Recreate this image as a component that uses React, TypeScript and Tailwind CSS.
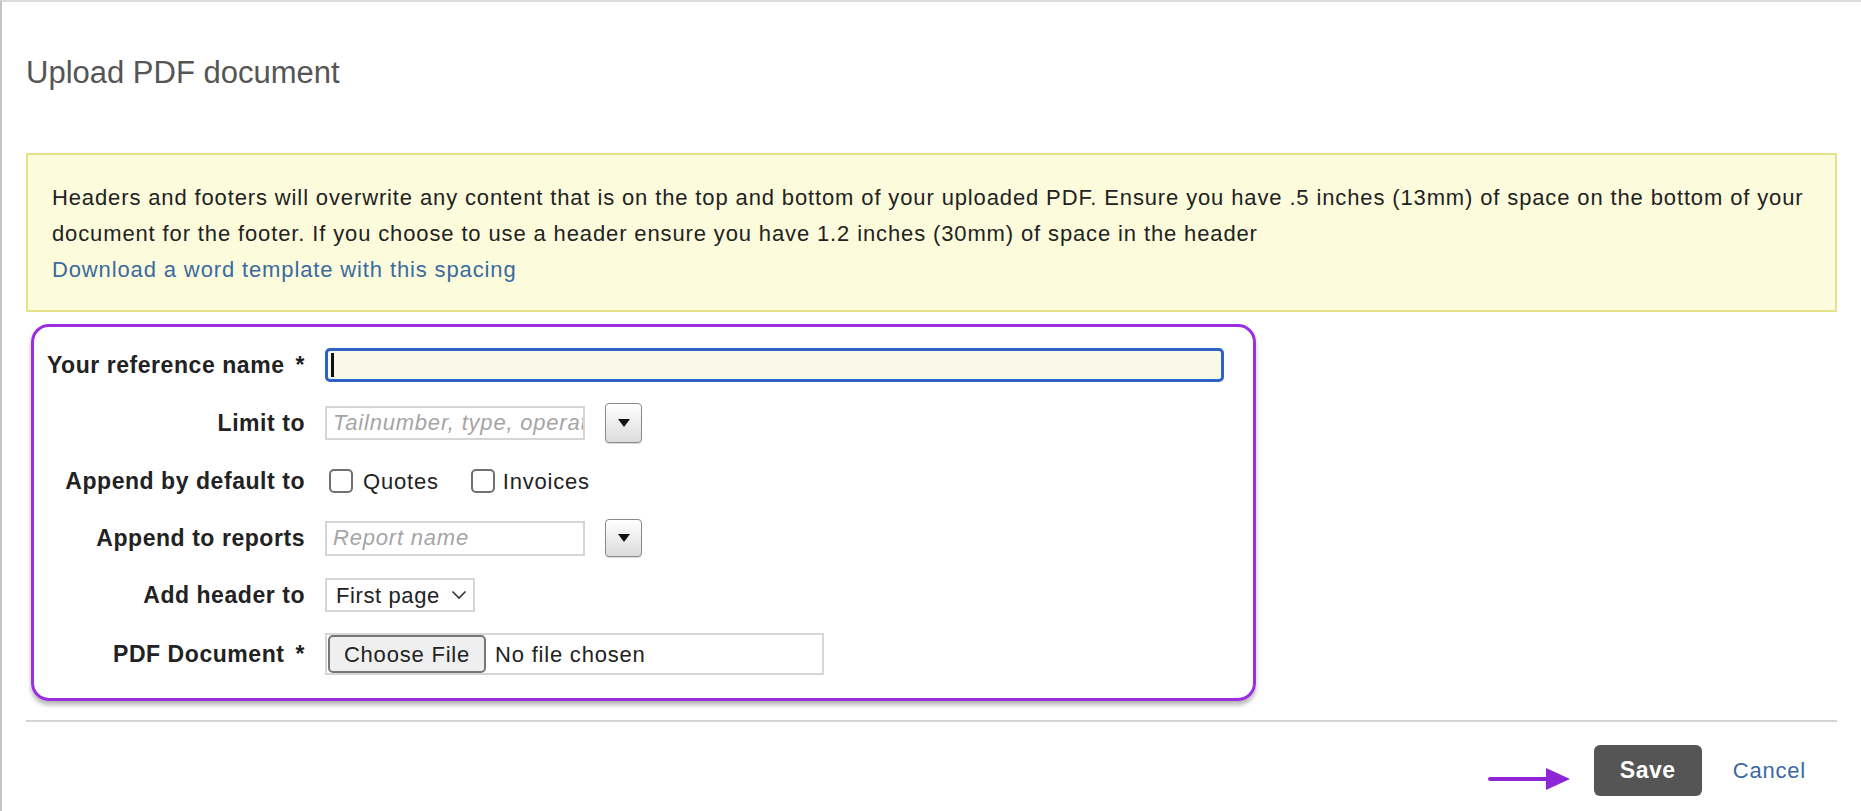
import React from "react";

function DropButton({ h }: { h: string }) {
  return (
    <button
      type="button"
      className={`ml-[20px] w-[37px] ${h} rounded-[4px] border border-[#8a8a8a] bg-linear-to-b from-white to-[#dcdcdc] flex items-center justify-center shadow-[0_1px_1px_rgba(0,0,0,0.15)]`}
    >
      <svg width="12" height="8" viewBox="0 0 12 8">
        <polygon points="0,0 12,0 6,8" fill="#111" />
      </svg>
    </button>
  );
}

function Label({ text, req }: { text: string; req?: boolean }) {
  return (
    <div className="w-[271px] shrink-0 text-right text-[23px] tracking-[0.55px] font-bold text-[#222] leading-none whitespace-nowrap">
      {text}
      {req && <span className="ml-[11px]">*</span>}
    </div>
  );
}

export default function App() {
  return (
    <div className="w-[1861px] h-[811px] overflow-hidden bg-white border-l-2 border-t-2 border-l-[#c4c4c4] border-t-[#dcdcdc] pl-[24px] pr-[24px] font-['Liberation_Sans',Arial,sans-serif] text-[#222]">
      <h1 className="mt-[53px] text-[31px] leading-[36px] text-[#555] font-normal">
        Upload PDF document
      </h1>

      <div className="mt-[62px] border-2 border-[#e6e28a] bg-[#fcfcdc] pl-[24px] pr-[18px] pt-[25px] pb-[22px] text-[22px] tracking-[0.87px] leading-[36px] text-[#222]">
        <p>
          Headers and footers will overwrite any content that is on the top and bottom of your uploaded PDF. Ensure you
          have .5 inches (13mm) of space on the bottom of your document for the footer. If you choose to use a header
          ensure you have 1.2 inches (30mm) of space in the header
        </p>
        <a className="text-[#3b6aa0] cursor-pointer">Download a word template with this spacing</a>
      </div>

      <div className="mt-[12px] ml-[5px] w-[1225px] border-[3px] border-[#9a2ee0] rounded-[18px] shadow-[0_4px_4px_rgba(0,0,0,0.28)] pt-[21px] pb-[23px] flex flex-col gap-[21px]">
        <div className="flex items-center h-[34px]">
          <Label text="Your reference name" req />
          <div className="ml-[20px] w-[899px] h-[34px] border-[3px] border-[#2d62c9] rounded-[5px] bg-[#f8f9e8] flex items-center">
            <div className="ml-[3px] w-[3px] h-[24px] bg-[#111]" />
          </div>
        </div>

        <div className="flex items-center h-[40px]">
          <Label text="Limit to" />
          <input
            className="ml-[20px] w-[260px] h-[34px] border-2 border-[#d5d5d5] pl-[6px] text-[22px] tracking-[0.8px] outline-none placeholder:italic placeholder:text-[#a5a5a5] bg-white"
            placeholder="Tailnumber, type, operator"
          />
          <DropButton h="h-[40px]" />
        </div>

        <div className="flex items-center h-[34px]">
          <Label text="Append by default to" />
          <div className="ml-[24px] flex items-center text-[22px] tracking-[0.8px] text-[#222]">
            <span className="w-[24px] h-[24px] border-2 border-[#707070] rounded-[5px] bg-white" />
            <span className="ml-[10px]">Quotes</span>
            <span className="ml-[32px] w-[24px] h-[24px] border-2 border-[#707070] rounded-[5px] bg-white" />
            <span className="ml-[8px]">Invoices</span>
          </div>
        </div>

        <div className="flex items-center h-[38px]">
          <Label text="Append to reports" />
          <input
            className="ml-[20px] w-[260px] h-[35px] border-2 border-[#d5d5d5] pl-[6px] text-[22px] tracking-[0.8px] outline-none placeholder:italic placeholder:text-[#a5a5a5] bg-white"
            placeholder="Report name"
          />
          <DropButton h="h-[38px]" />
        </div>

        <div className="flex items-center h-[34px]">
          <Label text="Add header to" />
          <div className="ml-[20px] w-[150px] h-[34px] border-2 border-[#d6d6d6] pl-[9px] pr-[6px] flex items-center text-[22px] tracking-[0.6px] text-[#222]">
            <span>First page</span>
            <svg className="ml-auto" width="16" height="10" viewBox="0 0 16 10">
              <polyline points="1.5,1.5 8,8 14.5,1.5" fill="none" stroke="#333" strokeWidth="1.6" />
            </svg>
          </div>
        </div>

        <div className="flex items-center h-[42px]">
          <Label text="PDF Document" req />
          <div className="ml-[20px] w-[499px] h-[42px] border-2 border-[#d6d6d6] flex items-center pl-[1px] text-[22px] tracking-[0.8px] text-[#222]">
            <div className="w-[158px] h-[38px] border-2 border-[#767676] rounded-[5px] bg-[#efefef] flex items-center justify-center">
              Choose File
            </div>
            <span className="ml-[9px]">No file chosen</span>
          </div>
        </div>
      </div>

      <div className="mt-[19px] h-[2px] bg-[#d4d4d4]" />

      <div className="mt-[23px] flex justify-end items-center pr-[31px]">
        <svg className="mr-[24px] translate-y-[8px]" width="82" height="26" viewBox="0 0 82 26">
          <line x1="2" y1="13" x2="62" y2="13" stroke="#8e25d9" strokeWidth="4" strokeLinecap="round" />
          <polygon points="58,2 82,13 58,24" fill="#8e25d9" />
        </svg>
        <button
          type="button"
          className="w-[108px] h-[51px] bg-[#555] rounded-[6px] text-white font-bold text-[23px] tracking-[0.5px]"
        >
          Save
        </button>
        <a className="ml-[31px] text-[22px] tracking-[0.8px] text-[#3b6aa0] cursor-pointer">Cancel</a>
      </div>
    </div>
  );
}
